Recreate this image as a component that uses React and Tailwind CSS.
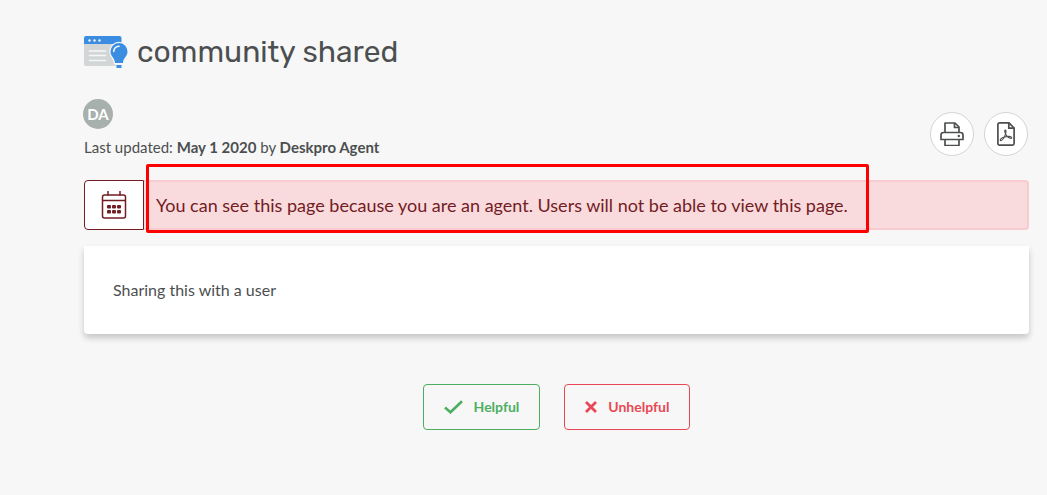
import React from "react";

function CommunityIcon() {
  return (
    <svg viewBox="0 0 44 33" className="h-[33px] w-11 shrink-0" aria-hidden="true">
      <path d="M0 8H37.500V27a3 3 0 0 1-3 3H2a2 2 0 0 1-2-2Z" fill="#d2d6d6" />
      <path d="M2 0H35.500a2 2 0 0 1 2 2V8H0V2a2 2 0 0 1 2-2Z" fill="#3a8de0" />
      <g fill="#f7f7f7">
        <circle cx="5.500" cy="4.500" r="1.200" />
        <circle cx="10.500" cy="4.500" r="1.200" />
        <circle cx="15.500" cy="4.500" r="1.200" />
      </g>
      <path d="M5.500 15H21.500M5.500 19.500H21.500M5.500 24.500H21.500" stroke="#f7f7f7" strokeWidth="1.600" strokeLinecap="round" />
      <path
        d="M35 7a8.500 8.500 0 0 0-8.500 8.500c0 5 4.500 6.500 4.500 11.500h8c0-5 4.500-6.500 4.500-11.500A8.500 8.500 0 0 0 35 7Z"
        fill="#3a8de0"
        stroke="#f7f7f7"
        strokeWidth="2.400"
        paintOrder="stroke"
      />
      <path d="M29.700 15.500a5.300 5.300 0 0 1 5.300-5.300" fill="none" stroke="#fff" strokeWidth="1.500" strokeLinecap="round" />
      <path d="M32.500 29h5v3h-5z" fill="#3a8de0" />
      <path d="M31 28.300h8" stroke="#f7f7f7" strokeWidth="1.200" />
    </svg>
  );
}

function PrintIcon() {
  return (
    <svg viewBox="0 0 24 24" className="size-6" fill="none" stroke="#4c4f50" strokeWidth="1.700" strokeLinejoin="round" aria-hidden="true">
      <path d="M5 10.500V1h10l4 4v5.500" />
      <path d="M14.500 1v4.500H19" />
      <path d="M5 17.500H1V13a2.500 2.500 0 0 1 2.500-2.500h17A2.500 2.500 0 0 1 23 13v4.500H1" />
      <path d="M5 17.500V23.500H19V17.500" />
      <circle cx="18.800" cy="14" r="1.200" fill="#4c4f50" stroke="none" />
    </svg>
  );
}

function PdfIcon() {
  return (
    <svg viewBox="0 0 18 24" className="h-6 w-[18px]" fill="none" stroke="#4c4f50" strokeWidth="1.700" strokeLinejoin="round" strokeLinecap="round" aria-hidden="true">
      <path d="M2.500 .9H12l5.100 5.100V21.500a1.600 1.600 0 0 1-1.600 1.600H2.500A1.600 1.600 0 0 1 .9 21.500V2.500A1.600 1.600 0 0 1 2.500 .9Z" />
      <path d="M11.800 1v5.200H17" />
      <path
        strokeWidth="1.100"
        d="M8.300 8c-1.300 0-.3 3.400 1.100 5.300 1.300 1.700 3.200 3.400 4.700 3.100 1.600-.5 .2-2.200-3-2-2.500 .1-4.800 .9-6.200 1.700-1.900 1-2.100 2.700-1 2.500 1.500-.2 3.400-3.300 4.300-5.700C9 11 9.400 8 8.300 8Z"
      />
    </svg>
  );
}

function CalendarIcon() {
  return (
    <svg viewBox="0 0 26 28" className="h-7 w-[26px]" fill="none" stroke="#721c24" strokeWidth="1.500" aria-hidden="true">
      <rect x="1.500" y="4" width="23" height="23" rx="2" />
      <path d="M1.500 9.500H24.500M7 0V4.500M19 0V4.500" />
      <g fill="#721c24" stroke="none">
        <rect x="6" y="14" width="4" height="3.500" rx="1" />
        <rect x="11" y="14" width="4" height="3.500" rx="1" />
        <rect x="16" y="14" width="4" height="3.500" rx="1" />
        <rect x="6" y="19" width="4" height="3.500" rx="1" />
        <rect x="11" y="19" width="4" height="3.500" rx="1" />
        <rect x="16" y="19" width="4" height="3.500" rx="1" />
      </g>
    </svg>
  );
}

export default function App() {
  return (
    <main className="min-h-screen bg-[#f7f7f7] pt-9 pr-[18px] pb-16 pl-[84px] font-['Lato',sans-serif] text-[#4c4f50]">
      <header className="flex h-8 items-center gap-[9px]">
        <CommunityIcon />
        <h1 className="font-['Rubik','Roboto',sans-serif] text-[30px] leading-8 font-normal">community shared</h1>
      </header>

      <div className="mt-[31px] flex items-center justify-between">
        <div>
          <div className="-ml-px flex size-[30px] items-center justify-center rounded-full bg-[#a8b0ae] text-[15px] font-bold text-white">
            DA
          </div>
          <p className="mt-2 text-[15px] leading-5">
            Last updated: <strong>May 1 2020</strong> by <strong>Deskpro Agent</strong>
          </p>
        </div>
        <div className="flex gap-2.5 self-end pr-px pb-px">
          <button type="button" aria-label="Print" className="flex size-11 items-center justify-center rounded-full border border-[#d2d5d5] bg-white">
            <PrintIcon />
          </button>
          <button type="button" aria-label="Download PDF" className="flex size-11 items-center justify-center rounded-full border border-[#d2d5d5] bg-white">
            <PdfIcon />
          </button>
        </div>
      </div>

      <div role="alert" className="relative mt-[23px] flex h-[50px] text-[#721c24]">
        <div className="flex w-[60px] shrink-0 items-center justify-center rounded-l border border-[#721c24] bg-white">
          <CalendarIcon />
        </div>
        <div className="flex grow items-center rounded-r border-2 border-l-0 border-[#f7cbcf] bg-[#f9dadd] pl-3 text-lg">
          You can see this page because you are an agent. Users will not be able to view this page.
        </div>
        <div className="pointer-events-none absolute -top-4 left-[62px] h-[69px] w-[723px] rounded-xs border-3 border-[#ff0000]" />
      </div>

      <article className="mt-4 rounded-b bg-white px-[29px] py-8 text-base shadow-[0_4px_6px_rgba(0,0,0,0.2)]">
        <p>Sharing this with a user</p>
      </article>

      <div className="mt-[50px] flex justify-center gap-6 text-sm font-bold">
        <button type="button" className="flex h-[46px] items-center gap-[11px] rounded border border-[#4caf5f] px-5 text-[#4caf5f]">
          <svg viewBox="0 0 19 14" className="h-3.5 w-[19px]" fill="none" stroke="currentColor" strokeWidth="2.600" aria-hidden="true">
            <path d="M1 7.500 6.500 12.300 18 1.300" />
          </svg>
          Helpful
        </button>
        <button type="button" className="flex h-[46px] items-center gap-[11px] rounded border border-[#e84855] px-5 text-[#e84855]">
          <svg viewBox="0 0 12 12" className="size-3" fill="none" stroke="currentColor" strokeWidth="2.800" aria-hidden="true">
            <path d="M1 1 11 11M11 1 1 11" />
          </svg>
          Unhelpful
        </button>
      </div>
    </main>
  );
}
